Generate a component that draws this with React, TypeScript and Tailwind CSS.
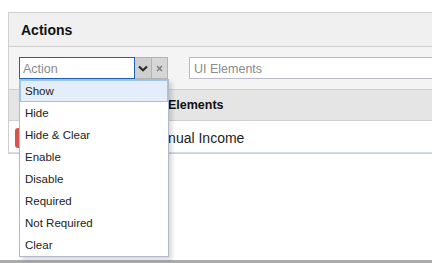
import { useState } from 'react';

const actions = ['Show', 'Hide', 'Hide & Clear', 'Enable', 'Disable', 'Required', 'Not Required', 'Clear'];

export default function App() {
  const [active] = useState('Show');

  return (
    <div className="w-[432px] h-[263px] overflow-hidden bg-white flex flex-col font-['Liberation_Sans',Arial,sans-serif] text-[#222]">
      <div className="pt-[12px] pl-[8px] flex-1">
        <div className="w-[440px] border border-[#cfcfcf]">
          <div className="h-[34px] bg-[#f0f0f0] border-b border-[#cfcfcf] flex items-center pl-[12px] pt-[2px]">
            <h1 className="text-[14px] font-bold text-[#111]">Actions</h1>
          </div>

          <div className="bg-[#f4f4f4] px-[10px] py-[10px] flex items-center gap-[21px]">
            <div className="relative flex">
              <input
                placeholder="Action"
                className="w-[116px] h-[22px] border border-[#1c62b5] bg-white px-[3px] pt-[1px] text-[12.5px] outline-none placeholder:text-[#8a8a8a]"
              />
              <button className="w-[16px] h-[22px] bg-[#cfcfcf] border-y border-[#b3b3b3] flex items-center justify-center">
                <svg width="10" height="7" viewBox="0 0 10 7">
                  <path d="M1 1.5 L5 5.2 L9 1.5" fill="none" stroke="#2a2a2a" strokeWidth="2.2" />
                </svg>
              </button>
              <button className="w-[17px] h-[22px] bg-[#d6d6d6] border border-[#b3b3b3] flex items-center justify-center">
                <svg width="7" height="7" viewBox="0 0 7 7">
                  <path d="M1 1 L6 6 M6 1 L1 6" fill="none" stroke="#777" strokeWidth="1.3" />
                </svg>
              </button>

              <ul className="absolute left-0 top-[22px] w-[150px] bg-white border border-[#b3b8cc] shadow-[3px_3px_4px_rgba(0,0,0,0.15)] z-10">
                {actions.map((a) => (
                  <li
                    key={a}
                    className={
                      a === active
                        ? 'h-[22px] flex items-center pl-[4px] pt-[2px] text-[11.5px] bg-[#e3eefa] border border-[#9fc3ea]'
                        : 'h-[22px] flex items-center pl-[5px] pt-[2px] text-[11.5px]'
                    }
                  >
                    {a}
                  </li>
                ))}
              </ul>
            </div>
            <input
              placeholder="UI Elements"
              className="flex-1 h-[22px] border border-[#b9b9c9] bg-white px-[4px] pt-[1px] text-[12.5px] outline-none placeholder:text-[#8a8a8a]"
            />
          </div>

          <div className="h-[32px] bg-[#e5e5e5] border-y border-[#cfcfcf] flex items-center pt-[1px]">
            <div className="w-[137px]" />
            <div className="pl-[6px] text-[12.5px] font-bold text-[#111]">UI Elements</div>
          </div>

          <div className="h-[32px] bg-white border-b border-[#d6dde8] flex items-center pt-[3px]">
            <div className="w-[137px] pl-[6px]">
              <span className="block w-[40px] h-[20px] rounded-[3px] bg-[#d9534f]" />
            </div>
            <div className="pl-[5px] text-[14px]">Annual Income</div>
          </div>
        </div>
      </div>
      <div className="h-[3px] bg-[#ababab]" />
    </div>
  );
}
